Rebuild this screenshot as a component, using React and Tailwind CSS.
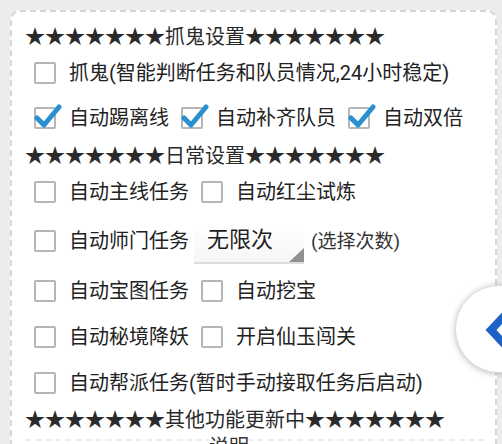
import React from "react";

const FONT = { fontFamily: 'Roboto, "Noto Sans CJK SC", sans-serif' };

function Box({ checked }) {
  return (
    <div className="relative w-[22px] h-[22px] shrink-0 border-2 border-[#b6b6b6] rounded-[2px] bg-white">
      {checked && (
        <svg className="absolute left-[-2px] top-[-7px]" width="28" height="28" viewBox="0 0 28 28">
          <path d="M3 16 L10 23 L25 5" fill="none" stroke="#2a90cf" strokeWidth="5" strokeLinecap="round" strokeLinejoin="round" />
        </svg>
      )}
    </div>
  );
}

function Item({ checked, label, first }) {
  return (
    <div className={`flex items-center ${first ? "ml-[9px]" : "ml-[12px]"}`}>
      <Box checked={checked} />
      <span className="ml-[13px] text-[20px] leading-none text-[#222] whitespace-nowrap">{label}</span>
    </div>
  );
}

function Header({ title, h }) {
  return (
    <div className={`flex items-center ${h} text-[20px] leading-none text-[#2a2a2a] whitespace-nowrap`}>
      ★★★★★★★{title}★★★★★★★
    </div>
  );
}

export default function App() {
  return (
    <div className="relative w-[502px] h-[444px] overflow-hidden bg-[#ececec]" style={FONT}>
      <div className="ml-[10px] mt-[10px] w-[487px] h-[460px] border-2 border-dashed border-[#d6d6d6] rounded-[10px] bg-white pl-[13px] pt-[13px]">
        <Header title="抓鬼设置" h="h-[24px]" />
        <div className="flex items-center h-[48px]">
          <Item first label="抓鬼(智能判断任务和队员情况,24小时稳定)" />
        </div>
        <div className="flex items-center h-[42px]">
          <Item first checked label="自动踢离线" />
          <Item checked label="自动补齐队员" />
          <Item checked label="自动双倍" />
        </div>
        <Header title="日常设置" h="h-[34px]" />
        <div className="flex items-center h-[38px]">
          <Item first label="自动主线任务" />
          <Item label="自动红尘试炼" />
        </div>
        <div className="flex items-center h-[60px]">
          <Item first label="自动师门任务" />
          <div className="relative ml-[5px] w-[110px] h-[40px] mt-[6px] flex items-center pl-[13px] bg-gradient-to-b from-white to-[#f6f6f6] border-b-2 border-[#dcdcdc]">
            <span className="text-[22px] leading-none text-[#1e1e1e] mt-[-6px]">无限次</span>
            <svg className="absolute right-0 bottom-0" width="15" height="14" viewBox="0 0 15 14">
              <polygon points="15,0 15,14 0,14" fill="#909090" />
            </svg>
          </div>
          <span className="ml-[7px] text-[19px] leading-none text-[#333]">(选择次数)</span>
        </div>
        <div className="flex items-center h-[40px]">
          <Item first label="自动宝图任务" />
          <Item label="自动挖宝" />
        </div>
        <div className="flex items-center h-[52px]">
          <Item first label="自动秘境降妖" />
          <Item label="开启仙玉闯关" />
        </div>
        <div className="flex items-center h-[40px]">
          <Item first label="自动帮派任务(暂时手动接取任务后启动)" />
        </div>
        <Header title="其他功能更新中" h="h-[34px]" />
        <div className="relative h-[20px] border-t-2 border-dashed border-[#ececec] mt-[2px] mr-[10px]">
          <span className="absolute left-[184px] top-[-4px] text-[20px] leading-none text-[#333] bg-white">说明</span>
        </div>
      </div>
      <div className="absolute left-[455px] top-[285px] w-[88px] h-[88px] rounded-full bg-white border border-[#dcdcdc] shadow-[0_1px_6px_rgba(0,0,0,0.25)]">
        <svg className="absolute left-[26px] top-[24px]" width="30" height="40" viewBox="0 0 30 40">
          <path d="M24 4 L9 20 L24 36" fill="none" stroke="#1d63c6" strokeWidth="8" strokeLinejoin="miter" />
        </svg>
      </div>
    </div>
  );
}
